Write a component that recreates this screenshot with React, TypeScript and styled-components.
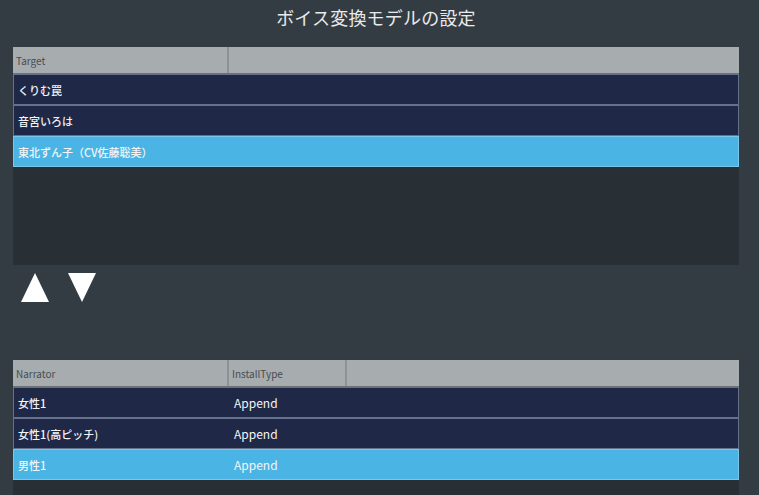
import React from "react";
import styled, { createGlobalStyle } from "styled-components";

const Global = createGlobalStyle`
  html, body { margin: 0; padding: 0; background: #343c43; overflow: hidden; }
  * { box-sizing: border-box; }
  body { font-family: "Noto Sans CJK JP", "Noto Sans", sans-serif; }
`;

const Page = styled.div`
  width: 759px;
  height: 495px;
  background: #343c43;
  padding: 0 20px 0 13px;
  display: flex;
  flex-direction: column;
  overflow: hidden;
`;

const Title = styled.h1`
  margin: 0;
  height: 47px;
  flex-shrink: 0;
  display: flex;
  align-items: center;
  justify-content: center;
  padding-bottom: 14px;
  font-size: 18px;
  font-weight: 400;
  color: #e8eaec;
  letter-spacing: 0.2px;
`;

const ListBox = styled.div<{ $height?: number }>`
  background: #283035;
  ${(p) => (p.$height ? `height: ${p.$height}px; flex-shrink: 0;` : "flex: 1 0 auto;")}
  display: flex;
  flex-direction: column;
`;

const HeaderRow = styled.div<{ $cols: string }>`
  display: grid;
  grid-template-columns: ${(p) => p.$cols};
  height: 27px;
  flex-shrink: 0;
  background: #a7acaf;
  border-bottom: 1px solid #6b7379;
`;

const HeaderCell = styled.div`
  display: flex;
  align-items: center;
  padding-left: 3px;
  font-size: 10px;
  color: #474d52;
  border-right: 2px solid #8d9296;
  &:last-child { border-right: none; }
`;

const Row = styled.div<{ $cols: string; $selected?: boolean }>`
  display: grid;
  grid-template-columns: ${(p) => p.$cols};
  height: 31px;
  flex-shrink: 0;
  background: ${(p) => (p.$selected ? "#4ab4e5" : "#1f2846")};
  border: 1px solid ${(p) => (p.$selected ? "#79c6ea" : "#65708a")};
`;

const Cell = styled.div`
  display: flex;
  align-items: center;
  padding-left: 4px;
  font-size: 11px;
  font-weight: 500;
  color: #f2f4f6;
  white-space: nowrap;
`;

const ValueCell = styled(Cell)`
  font-weight: 400;
  font-size: 12px;
  padding-left: 4px;
`;

const ArrowBar = styled.div`
  display: flex;
  gap: 19px;
  padding: 8px 0 0 8px;
  height: 95px;
  flex-shrink: 0;
`;

const ArrowButton = styled.button`
  border: none;
  background: transparent;
  padding: 0;
  width: 28px;
  height: 29px;
  cursor: pointer;
  display: block;
`;

const UpArrow = () => (
  <svg width="28" height="29" viewBox="0 0 28 29">
    <polygon points="14,0 28,29 0,29" fill="#ffffff" />
  </svg>
);
const DownArrow = () => (
  <svg width="28" height="29" viewBox="0 0 28 29">
    <polygon points="0,0 28,0 14,29" fill="#ffffff" />
  </svg>
);

const targets = ["くりむ罠", "音宮いろは", "東北ずん子（CV佐藤聡美）"];
const narrators = [
  { name: "女性1", type: "Append" },
  { name: "女性1(高ピッチ)", type: "Append" },
  { name: "男性1", type: "Append" },
];

const topCols = "216px 1fr";
const botCols = "216px 118px 1fr";

export default function App() {
  return (
    <>
      <Global />
      <Page>
        <Title>ボイス変換モデルの設定</Title>
        <ListBox $height={218}>
          <HeaderRow $cols={topCols}>
            <HeaderCell>Target</HeaderCell>
            <HeaderCell />
          </HeaderRow>
          {targets.map((t, i) => (
            <Row key={t} $cols={topCols} $selected={i === 2}>
              <Cell>{t}</Cell>
              <Cell />
            </Row>
          ))}
        </ListBox>
        <ArrowBar>
          <ArrowButton aria-label="up">
            <UpArrow />
          </ArrowButton>
          <ArrowButton aria-label="down">
            <DownArrow />
          </ArrowButton>
        </ArrowBar>
        <ListBox>
          <HeaderRow $cols={botCols}>
            <HeaderCell>Narrator</HeaderCell>
            <HeaderCell>InstallType</HeaderCell>
            <HeaderCell />
          </HeaderRow>
          {narrators.map((n, i) => (
            <Row key={n.name} $cols={botCols} $selected={i === 2}>
              <Cell>{n.name}</Cell>
              <ValueCell>{n.type}</ValueCell>
              <Cell />
            </Row>
          ))}
        </ListBox>
      </Page>
    </>
  );
}
